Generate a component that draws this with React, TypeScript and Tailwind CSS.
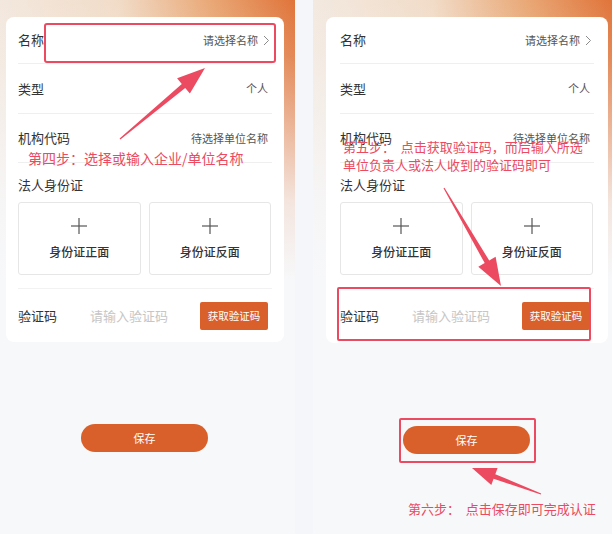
import React from "react";

const FONT = { fontFamily: '"Noto Sans CJK SC", "Noto Sans", sans-serif' };

function Chevron() {
  return (
    <svg width="7" height="11" viewBox="0 0 7 11" className="ml-[5px]">
      <polyline points="1,1 5.5,5.5 1,10" fill="none" stroke="#8a8a8a" strokeWidth="1" />
    </svg>
  );
}

function Plus() {
  return (
    <svg width="16" height="16" viewBox="0 0 16 16">
      <line x1="8" y1="0" x2="8" y2="16" stroke="#555" strokeWidth="1.2" />
      <line x1="0" y1="8" x2="16" y2="8" stroke="#555" strokeWidth="1.2" />
    </svg>
  );
}

function Card({ wide }: { wide?: boolean }) {
  const pad = wide ? "px-[14px]" : "px-[12px]";
  return (
    <div className={`bg-white rounded-[8px] ${pad} ${wide ? "w-[282px] h-[326px]" : "w-[278px] h-[325px]"}`}>
      <div className="h-[47px] flex items-center justify-between border-b border-[#efefef]">
        <span className="text-[13px] text-[#333]">名称</span>
        <span className="flex items-center text-[11px] text-[#555] mr-[2px]">
          请选择名称
          <Chevron />
        </span>
      </div>
      <div className="h-[50px] flex items-center justify-between border-b border-[#efefef]">
        <span className="text-[13px] text-[#333]">类型</span>
        <span className="text-[11px] text-[#555] mr-[4px]">个人</span>
      </div>
      <div className="h-[49px] flex items-center justify-between border-b border-[#efefef]">
        <span className="text-[13px] text-[#333]">机构代码</span>
        <span className="text-[11px] text-[#555] mr-[4px]">待选择单位名称</span>
      </div>
      <div className="pt-[14px] pb-[13px] border-b border-[#f2f2f2]">
        <div className="text-[13px] text-[#333] leading-[16px]">法人身份证</div>
        <div className="mt-[9px] grid grid-cols-2 gap-[8px] pr-[1px]">
          {["身份证正面", "身份证反面"].map((t) => (
            <div
              key={t}
              className="h-[73px] border border-[#e6e6e6] rounded-[3px] flex flex-col items-center justify-start pt-[15px]"
            >
              <Plus />
              <span className="mt-[11px] text-[12px] text-[#333] font-medium leading-[14px]">{t}</span>
            </div>
          ))}
        </div>
      </div>
      <div className={`${wide ? "h-[54px]" : "h-[53px]"} flex items-center`}>
        <span className="text-[13px] text-[#333] w-[72px]">验证码</span>
        <span className="text-[13px] text-[#c6c6c6]">请输入验证码</span>
        <span className="ml-auto mr-[4px] h-[28px] w-[68px] bg-[#d9602b] rounded-[2px] text-white text-[10.5px] flex items-center justify-center">
          获取验证码
        </span>
      </div>
    </div>
  );
}

function SaveButton() {
  return (
    <div className="w-[127px] h-[28px] rounded-full bg-[#d9602b] text-white text-[11px] flex items-center justify-center">
      保存
    </div>
  );
}

function arrowPoints(tx: number, ty: number, hx: number, hy: number, L: number, W: number, s: number) {
  const dx = hx - tx;
  const dy = hy - ty;
  const len = Math.sqrt(dx * dx + dy * dy);
  const ux = dx / len;
  const uy = dy / len;
  const nx = -uy;
  const ny = ux;
  const bx = hx - ux * L;
  const by = hy - uy * L;
  const pts = [
    [tx + nx * 0.6, ty + ny * 0.6],
    [bx + nx * s, by + ny * s],
    [bx + nx * W, by + ny * W],
    [hx, hy],
    [bx - nx * W, by - ny * W],
    [bx - nx * s, by - ny * s],
    [tx - nx * 0.6, ty - ny * 0.6],
  ];
  return pts.map((p) => `${p[0].toFixed(1)},${p[1].toFixed(1)}`).join(" ");
}

const RED = "#ec4a60";

export default function App() {
  return (
    <div className="relative w-[612px] h-[534px] bg-[#f4f6f9] flex overflow-hidden" style={FONT}>
      {/* left screen */}
      <div className="relative w-[295px] h-[534px] bg-[#f7f8fa] overflow-hidden">
        <div className="absolute inset-x-0 top-0 h-[280px] bg-[linear-gradient(to_bottom,rgba(247,248,250,0)_0%,rgba(247,248,250,0.15)_20%,rgba(247,248,250,0.55)_50%,rgba(247,248,250,0.85)_72%,#f7f8fa_100%),linear-gradient(to_right,#f3e8de_0%,#f1dcc8_40%,#e9a775_72%,#e0743a_100%)]" />
        <div className="relative pt-[17px] pl-[6px]">
          <Card />
          <div className="mt-[82px] ml-[75px]">
            <SaveButton />
          </div>
        </div>
      </div>
      {/* gap */}
      <div className="w-[18px]" />
      {/* right screen */}
      <div className="relative w-[299px] h-[534px] bg-[#f7f8fa] overflow-hidden">
        <div className="absolute inset-x-0 top-0 h-[280px] bg-[linear-gradient(to_bottom,rgba(247,248,250,0)_0%,rgba(247,248,250,0.15)_20%,rgba(247,248,250,0.55)_50%,rgba(247,248,250,0.85)_72%,#f7f8fa_100%),linear-gradient(to_right,#f3e9e0_0%,#f1dcc8_40%,#e9a775_72%,#e0743a_100%)]" />
        <div className="relative pt-[17px] pl-[13px]">
          <Card wide />
          <div className="mt-[83px] ml-[77px]">
            <SaveButton />
          </div>
        </div>
      </div>

      {/* annotations */}
      <div className="absolute left-[44px] top-[23px] w-[232px] h-[40px] border-2 border-[#ec4a60] rounded-[3px]" />
      <div className="absolute left-[28px] top-[148px] text-[14px] leading-[20px] text-[#ec4a60] whitespace-nowrap">
        第四步：选择或输入企业/单位名称
      </div>

      <div className="absolute left-[343px] top-[138px] text-[13px] leading-[18px] text-[#ec4a60] whitespace-nowrap">
        <div>第五步：&nbsp;&nbsp;点击获取验证码，而后输入所选</div>
        <div>单位负责人或法人收到的验证码即可</div>
      </div>
      <div className="absolute left-[337px] top-[287px] w-[254px] h-[54px] border-2 border-[#ec4a60] rounded-[2px]" />
      <div className="absolute left-[399px] top-[418px] w-[137px] h-[45px] border-2 border-[#ec4a60] rounded-[2px]" />
      <div className="absolute left-[408px] top-[499px] text-[13px] leading-[20px] text-[#ec4a60] whitespace-nowrap">
        第六步：&nbsp;&nbsp;点击保存即可完成认证
      </div>

      <svg className="absolute left-0 top-0" width="612" height="534" viewBox="0 0 612 534">
        <polygon points={arrowPoints(120, 139, 205, 68, 28, 10, 2.6)} fill={RED} />
        <polygon points={arrowPoints(444, 188, 501, 286, 28, 10, 2.6)} fill={RED} />
        <polygon points={arrowPoints(541, 494, 472, 468, 24, 9, 2.4)} fill={RED} />
      </svg>
    </div>
  );
}
